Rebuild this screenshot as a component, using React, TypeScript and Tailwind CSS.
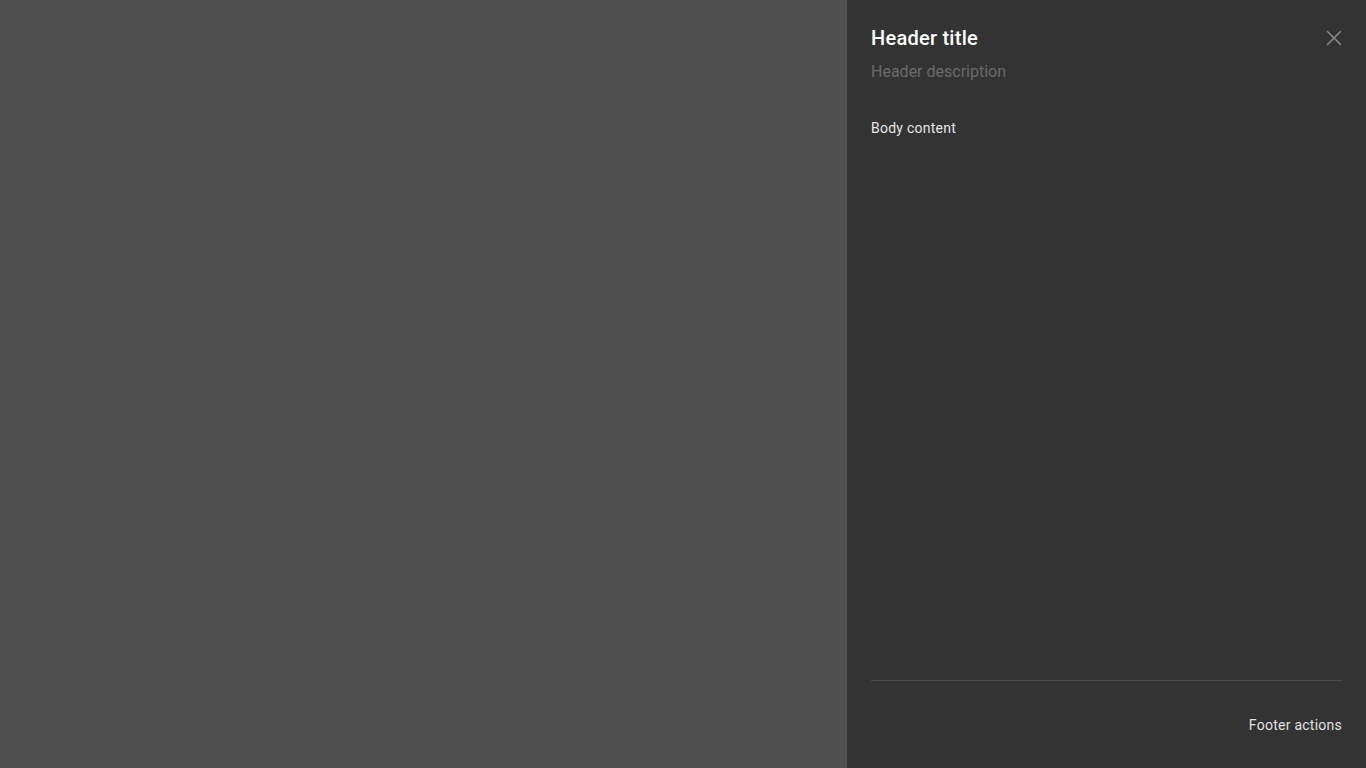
import React from 'react';

export default function App() {
  return (
    <div className="flex h-[768px] w-full bg-[#505050] font-['Roboto',sans-serif]">
      <div className="flex-1" />
      <aside className="flex h-full w-[519px] flex-col bg-[#333333] px-6">
        <div className="flex items-start justify-between pt-6">
          <div>
            <h2 className="text-[20px] font-medium leading-7 tracking-[0.25px] text-white">Header title</h2>
            <p className="mt-2 text-base leading-6 text-[#6b6b6b]">Header description</p>
          </div>
          <button className="mt-[6px] text-[#8a8a8a]">
            <svg width="16" height="16" viewBox="0 0 16 16" fill="none" stroke="currentColor" strokeWidth="1.5" strokeLinecap="round">
              <path d="M1.5 1.5 L14.5 14.5 M14.5 1.5 L1.5 14.5" />
            </svg>
          </button>
        </div>
        <div className="flex-1 pt-[34px] text-sm leading-5 tracking-[0.25px] text-[#e6e6e6]">Body content</div>
        <div className="flex h-[88px] items-center justify-end border-t border-[#4a4a4a] text-sm tracking-[0.25px] text-[#e0e0e0]">
          Footer actions
        </div>
      </aside>
    </div>
  );
}
